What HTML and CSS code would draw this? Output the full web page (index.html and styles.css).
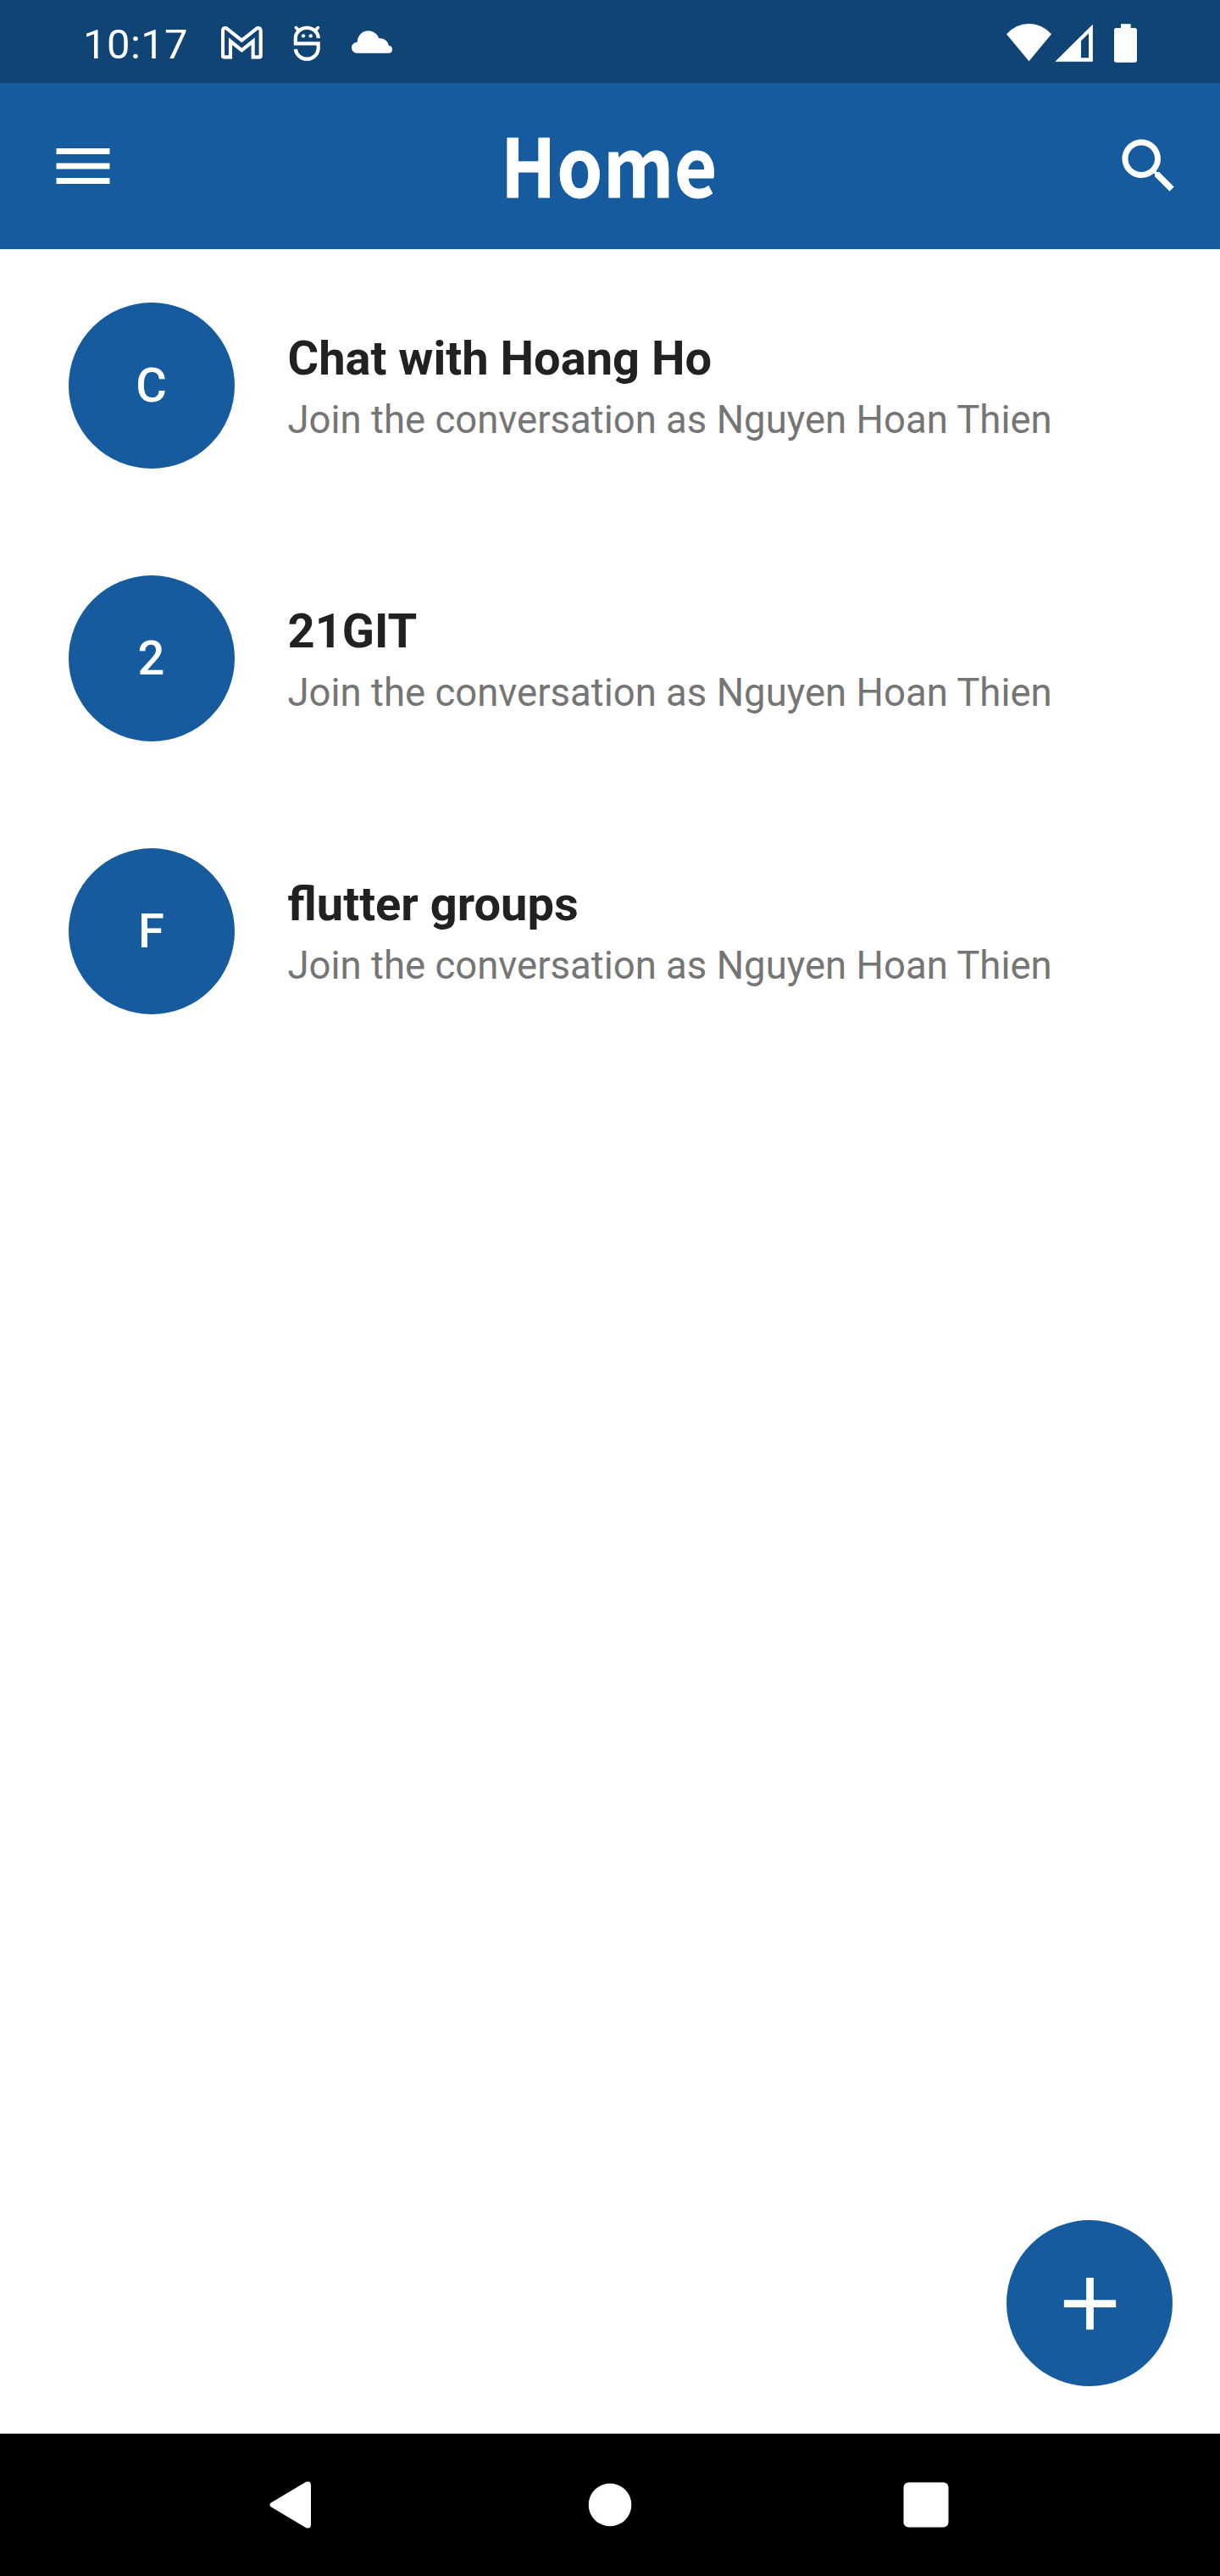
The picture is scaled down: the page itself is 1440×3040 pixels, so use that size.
FILE: index.html
```html
<!DOCTYPE html>
<html lang="en">
<head>
<meta charset="utf-8">
<title>Home</title>
<link rel="stylesheet" href="styles.css">
</head>
<body>
<div class="screen">
  <div class="status-bar">
    <span class="clock">10:17</span>
    <div class="notifications">
      <svg width="49" height="46" viewBox="543 84 147 138" fill="none" stroke="#fff" stroke-width="12.5"><path d="M552 202Q549 202 549 199V108Q550 97 561 99.500L616 143L671 99.500Q682 97 683 108V199Q683 202 680 202H656V146L616 178L576 146V202Z"/></svg>
      <svg width="33" height="46" viewBox="798 84 99 138" fill="none" stroke="#fff" stroke-width="12.500"><path d="M887 135V132A40.500 38 0 0 0 806.500 132V154H887V174A40.500 39.500 0 0 1 806.500 174"/><path d="M808 98L818 108M886 98L876 108" stroke-width="11" stroke-linecap="round"/><circle cx="834" cy="127" r="6.500" fill="#fff" stroke="none"/><circle cx="860" cy="127" r="6.500" fill="#fff" stroke="none"/></svg>
      <svg width="49" height="46" viewBox="1005 84 147 138" fill="#fff"><path d="M1024 188.500A19.500 19.500 0 0 1 1025 149.500A39.500 39.500 0 0 1 1102 136A31 31 0 0 1 1137 161.500A13.700 13.700 0 0 1 1138 188.500Z"/></svg>
    </div>
    <div class="system">
      <svg class="wifi" width="53" height="46" viewBox="84 84 159 138" fill="#fff"><path d="M84 121A104 104 0 0 1 243 121L163.500 217Z"/></svg>
      <svg class="signal" width="45" height="46" viewBox="255 84 135 138" fill="#fff" fill-rule="evenodd"><path d="M256 218L389.500 86V218ZM348 145V205H375V118Z"/></svg>
      <svg width="27" height="46" viewBox="465 84 81 138" fill="#fff"><path d="M489 99V85H524V99H538Q546 99 546 107V213Q546 221 538 221H473Q465 221 465 213V107Q465 99 473 99Z"/></svg>
    </div>
  </div>

  <header class="app-bar">
    <svg class="icon" viewBox="0 0 24 24"><path d="M3 18h18v-2H3v2zm0-5h18v-2H3v2zm0-7v2h18V6H3z"/></svg>
    <h1 class="page-title">Home</h1>
    <svg class="icon" viewBox="0 0 24 24"><path d="M15.500 14h-.79l-.28-.27C15.410 12.590 16 11.110 16 9.500 16 5.910 13.090 3 9.500 3S3 5.910 3 9.500 5.910 16 9.500 16c1.610 0 3.090-.59 4.230-1.570l.27.28v.79l5 4.990L20.490 19l-4.990-5zm-6 0C7.010 14 5 11.990 5 9.500S7.010 5 9.500 5 14 7.010 14 9.500 11.990 14 9.500 14z"/></svg>
  </header>

  <main class="groups">
    <div class="group">
      <div class="avatar">C</div>
      <div class="info">
        <div class="name">Chat with Hoang Ho</div>
        <div class="detail">Join the conversation as Nguyen Hoan Thien</div>
      </div>
    </div>
    <div class="group">
      <div class="avatar">2</div>
      <div class="info">
        <div class="name">21GIT</div>
        <div class="detail">Join the conversation as Nguyen Hoan Thien</div>
      </div>
    </div>
    <div class="group">
      <div class="avatar">F</div>
      <div class="info">
        <div class="name">flutter groups</div>
        <div class="detail">Join the conversation as Nguyen Hoan Thien</div>
      </div>
    </div>
    <div class="fab"><svg width="105" height="105" viewBox="0 0 24 24" fill="#fff"><path d="M19 13h-6v6h-2v-6H5v-2h6V5h2v6h6v2z"/></svg></div>
  </main>

  <nav class="nav-bar">
    <svg width="50" height="58" viewBox="0 0 50 58" fill="#fff"><path d="M2 26.500L43 2Q49 0 49 6V52Q49 58 43 56L2 31.500Q-1.500 29 2 26.500Z"/></svg>
    <svg class="home" width="52" height="52" viewBox="0 0 52 52" fill="#fff"><circle cx="26" cy="26" r="25.300"/></svg>
    <svg width="54" height="54" viewBox="0 0 54 54" fill="#fff"><rect x=".5" y=".5" width="53" height="53" rx="6"/></svg>
  </nav>
</div>
</body>
</html>
```
FILE: styles.css
```css
* { box-sizing: border-box; }
body { margin: 0; background: #fff; font-family: Roboto, sans-serif; }
svg { display: block; flex: none; }

.screen { display: flex; flex-direction: column; width: 1440px; height: 3040px; background: #fff; }

.status-bar { display: flex; align-items: center; height: 98px; padding: 4px 98px 0; background: #0f4475; color: #fff; }
.clock { width: 163px; padding-top: 4px; font-size: 49px; line-height: 58px; letter-spacing: .4px; }
.notifications { display: flex; gap: 36px; }
.system { display: flex; margin-left: auto; }
.wifi { margin-right: 4px; }
.signal { margin-right: 25px; }

.app-bar { display: flex; align-items: center; height: 196px; padding: 0 42px 0 56px; background: #155b9d; }
.icon { width: 84px; height: 84px; fill: #fff; }
.page-title { flex: 1; margin: 0 16px 0 0; padding-bottom: 9px; color: #fff; font-family: "Noto Sans CJK JP", sans-serif; font-size: 95px; font-weight: 700; line-height: 140px; letter-spacing: .8px; text-align: center; transform: scaleX(.91); -webkit-text-stroke: .8px #fff; }

.groups { position: relative; flex: 1; padding: 63px 80px 0 80.5px; }
.group { display: flex; align-items: center; height: 196px; margin-bottom: 126px; }
.avatar { display: flex; flex: none; align-items: center; justify-content: center; width: 196px; height: 196px; border-radius: 50%; background: #155b9d; color: #fff; font-size: 56px; font-weight: 500; }
.info { margin-left: 63px; padding-top: 2px; white-space: nowrap; }
.name { margin-bottom: 13px; color: #212121; font-size: 56px; font-weight: 700; line-height: 66px; }
.detail { color: #757575; font-size: 45.5px; line-height: 54px; }

.fab { position: absolute; right: 56px; bottom: 56px; display: flex; align-items: center; justify-content: center; width: 196px; height: 196px; border-radius: 50%; background: #155b9d; }

.nav-bar { display: flex; align-items: center; height: 168px; padding-left: 318px; background: #000; }
.home { margin: 0 320px 0 326px; }
```
